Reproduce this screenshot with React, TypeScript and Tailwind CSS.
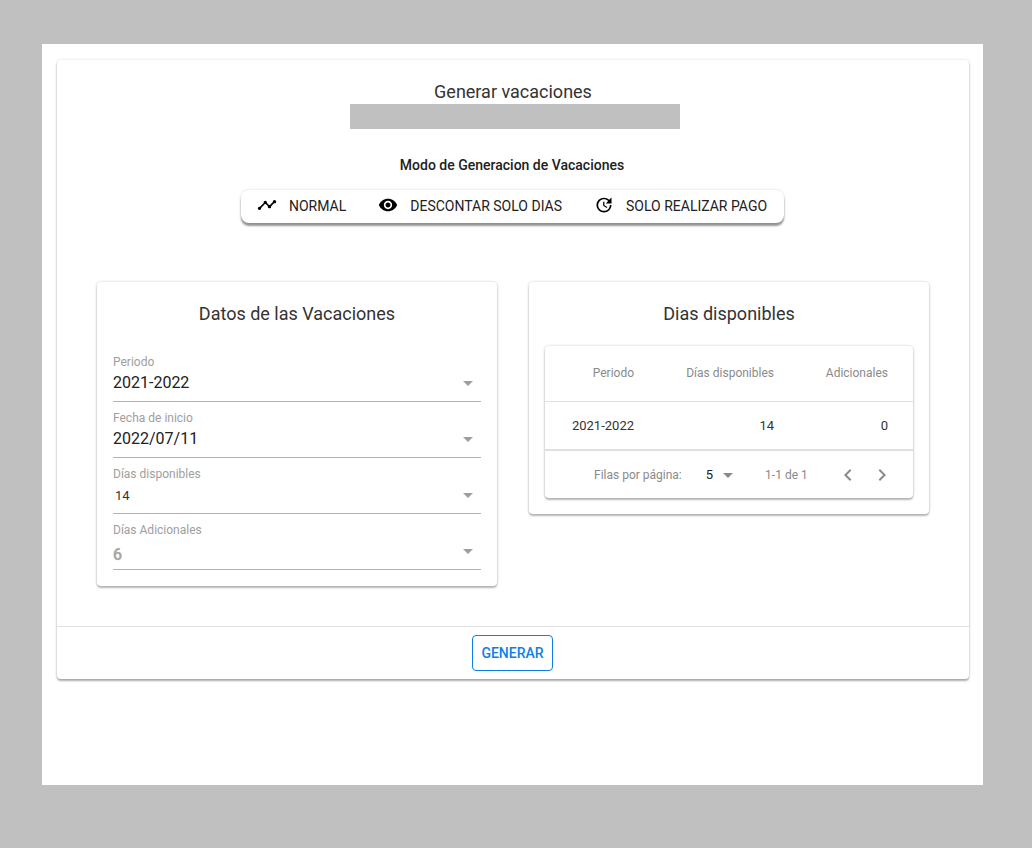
const ICONS = {
  timeline:
    "M23 8c0 1.1-.9 2-2 2-.18 0-.35-.02-.51-.07l-3.56 3.55c.05.16.07.34.07.52 0 1.1-.9 2-2 2s-2-.9-2-2c0-.18.02-.36.07-.52l-2.55-2.55c-.16.05-.34.07-.52.07s-.36-.02-.52-.07l-4.55 4.56c.05.16.07.33.07.51 0 1.1-.9 2-2 2s-2-.9-2-2 .9-2 2-2c.18 0 .35.02.51.07l4.56-4.55C8.02 9.36 8 9.18 8 9c0-1.1.9-2 2-2s2 .9 2 2c0 .18-.02.36-.07.52l2.55 2.55c.16-.05.34-.07.52-.07s.36.02.52.07l3.55-3.56C19.02 8.35 19 8.18 19 8c0-1.1.9-2 2-2s2 .9 2 2z",
  eye: "M12 4.5C7 4.5 2.73 7.61 1 12c1.73 4.39 6 7.5 11 7.5s9.27-3.11 11-7.5c-1.73-4.39-6-7.5-11-7.5zM12 17c-2.76 0-5-2.24-5-5s2.24-5 5-5 5 2.24 5 5-2.24 5-5 5zm0-8c-1.66 0-3 1.34-3 3s1.34 3 3 3 3-1.34 3-3-1.34-3-3-3z",
  update:
    "M21 10.12h-6.78l2.74-2.82c-2.73-2.7-7.15-2.8-9.88-.1-2.73 2.71-2.73 7.08 0 9.79s7.15 2.71 9.88 0C18.32 15.65 19 14.08 19 12.1h2c0 1.98-.88 4.55-2.64 6.29-3.51 3.48-9.21 3.48-12.72 0-3.5-3.47-3.53-9.11-.02-12.58s9.14-3.47 12.65 0L21 3v7.12zM12.5 8v4.25l3.5 2.08-.72 1.21L11 13V8h1.5z",
  dropdown: "M7 10l5 5 5-5z",
  left: "M15.41 7.41L14 6l-6 6 6 6 1.41-1.41L10.83 12z",
  right: "M10 6L8.59 7.41 13.17 12l-4.58 4.59L10 18l6-6z",
};

function Icon({ name, className }: { name: keyof typeof ICONS; className: string }) {
  return (
    <svg viewBox="0 0 24 24" fill="currentColor" className={className}>
      <path d={ICONS[name]} />
    </svg>
  );
}

function ModeButton({ icon, label, className }: { icon: keyof typeof ICONS; label: string; className?: string }) {
  return (
    <div className={`flex items-center ${className ?? ""}`}>
      <Icon name={icon} className="w-5 h-5 mb-[2px] text-black shrink-0" />
      <span className="ml-3 text-[14px] leading-5 text-[#212121]">{label}</span>
    </div>
  );
}

function Field({ label, children }: { label: string; children: React.ReactNode }) {
  return (
    <div className="h-[56px] border-b border-[#b3b3b3] flex flex-col relative">
      <div className="pt-[9px] text-[12px] leading-[14px] text-[#9e9e9e]">{label}</div>
      <div className="h-[24px] mt-[2px] flex items-center">{children}</div>
      <Icon name="dropdown" className="w-6 h-6 text-[#9e9e9e] absolute right-[1px] top-[25px]" />
    </div>
  );
}

export default function App() {
  return (
    <div className="min-h-screen bg-[#c0c0c0] pt-[44px] pl-[42px] font-['Roboto',sans-serif]">
      <div className="w-[941px] h-[741px] bg-white pl-[15px] pt-[16px]">
        <div className="w-[912px] h-[619px] bg-white rounded shadow-[0_0_3px_rgba(0,0,0,0.15),0_2px_2px_rgba(0,0,0,0.3)] flex flex-col">
          <div className="flex-1">
            <h1 className="pt-[19px] text-[18px] leading-[25px] text-center text-[#333333] font-normal">Generar vacaciones</h1>
            <div className="ml-[293px] w-[330px] h-[25px] bg-[#c0c0c0]" />
            <h2 className="mt-[27px] text-[14px] leading-[18px] font-medium text-center text-[#212121] -translate-x-px">Modo de Generacion de Vacaciones</h2>
            <div className="ml-[184px] mt-[16px] mb-[59px] w-[543px] h-[33px] pb-[2px] bg-white rounded-lg shadow-[0_0_3px_rgba(0,0,0,0.15),0_3px_2px_rgba(0,0,0,0.4)] flex items-center pl-4">
              <ModeButton icon="timeline" label="NORMAL" />
              <ModeButton icon="eye" label="DESCONTAR SOLO DIAS" className="ml-[32px]" />
              <ModeButton icon="update" label="SOLO REALIZAR PAGO" className="ml-[32px]" />
            </div>

            <div className="ml-[40px] flex items-start gap-8">
              <div className="w-[400px] h-[304px] bg-white rounded shadow-[0_0_3px_rgba(0,0,0,0.2),0_2px_2px_rgba(0,0,0,0.25)] px-4">
                <div className="pt-[20px] h-[64px] text-[18px] leading-6 text-center text-[#333333]">Datos de las Vacaciones</div>
                <Field label="Periodo">
                  <span className="text-[16px] text-[#212121]">2021-2022</span>
                </Field>
                <Field label="Fecha de inicio">
                  <span className="text-[16px] text-[#212121]">2022/07/11</span>
                </Field>
                <Field label="Días disponibles">
                  <span className="mt-[2px] ml-[2px] text-[13px] text-[#333333]">14</span>
                </Field>
                <Field label="Días Adicionales">
                  <span className="mt-[8px] text-[16px] font-medium text-[#a8a8a8] [text-shadow:0_0_1px_#bbbbbb]">6</span>
                </Field>
              </div>

              <div className="w-[400px] h-[232px] bg-white rounded shadow-[0_0_3px_rgba(0,0,0,0.2),0_2px_2px_rgba(0,0,0,0.25)] px-4">
                <div className="pt-[20px] h-[64px] text-[18px] leading-6 text-center text-[#333333]">Dias disponibles</div>
                <div className="h-[152px] bg-white rounded shadow-[0_0_3px_rgba(0,0,0,0.2),0_2px_2px_rgba(0,0,0,0.25)]">
                  <div className="h-[56px] pb-[1px] border-b border-[#e0e0e0] grid grid-cols-[89px_140px_114px] items-center text-right text-[12px] text-[#8a8a8a]">
                    <div>Periodo</div>
                    <div>Días disponibles</div>
                    <div>Adicionales</div>
                  </div>
                  <div className="h-[49px] border-b-2 border-[#e0e0e0] grid grid-cols-[89px_140px_114px] items-center text-right text-[13px] text-[#333333]">
                    <div>2021-2022</div>
                    <div>14</div>
                    <div>0</div>
                  </div>
                  <div className="h-[47px] pl-[49px] flex items-center text-[12px] text-[#8a8a8a]">
                    <span>Filas por página:</span>
                    <span className="ml-[24px] text-[13px] text-[#212121]">5</span>
                    <Icon name="dropdown" className="w-6 h-6 ml-[3px] text-[#8a8a8a]" />
                    <span className="ml-[25px]">1-1 de 1</span>
                    <Icon name="left" className="w-6 h-6 ml-[28px] text-[#8a8a8a]" />
                    <Icon name="right" className="w-6 h-6 ml-[10px] text-[#8a8a8a]" />
                  </div>
                </div>
              </div>
            </div>
          </div>

          <div className="h-[53px] border-t border-[#e0e0e0] flex items-center justify-center">
            <button className="w-[81px] h-[36px] ml-[-1px] border border-[#0d80e6] rounded text-[14px] font-medium text-[#0d80e6]">GENERAR</button>
          </div>
        </div>
      </div>
    </div>
  );
}
